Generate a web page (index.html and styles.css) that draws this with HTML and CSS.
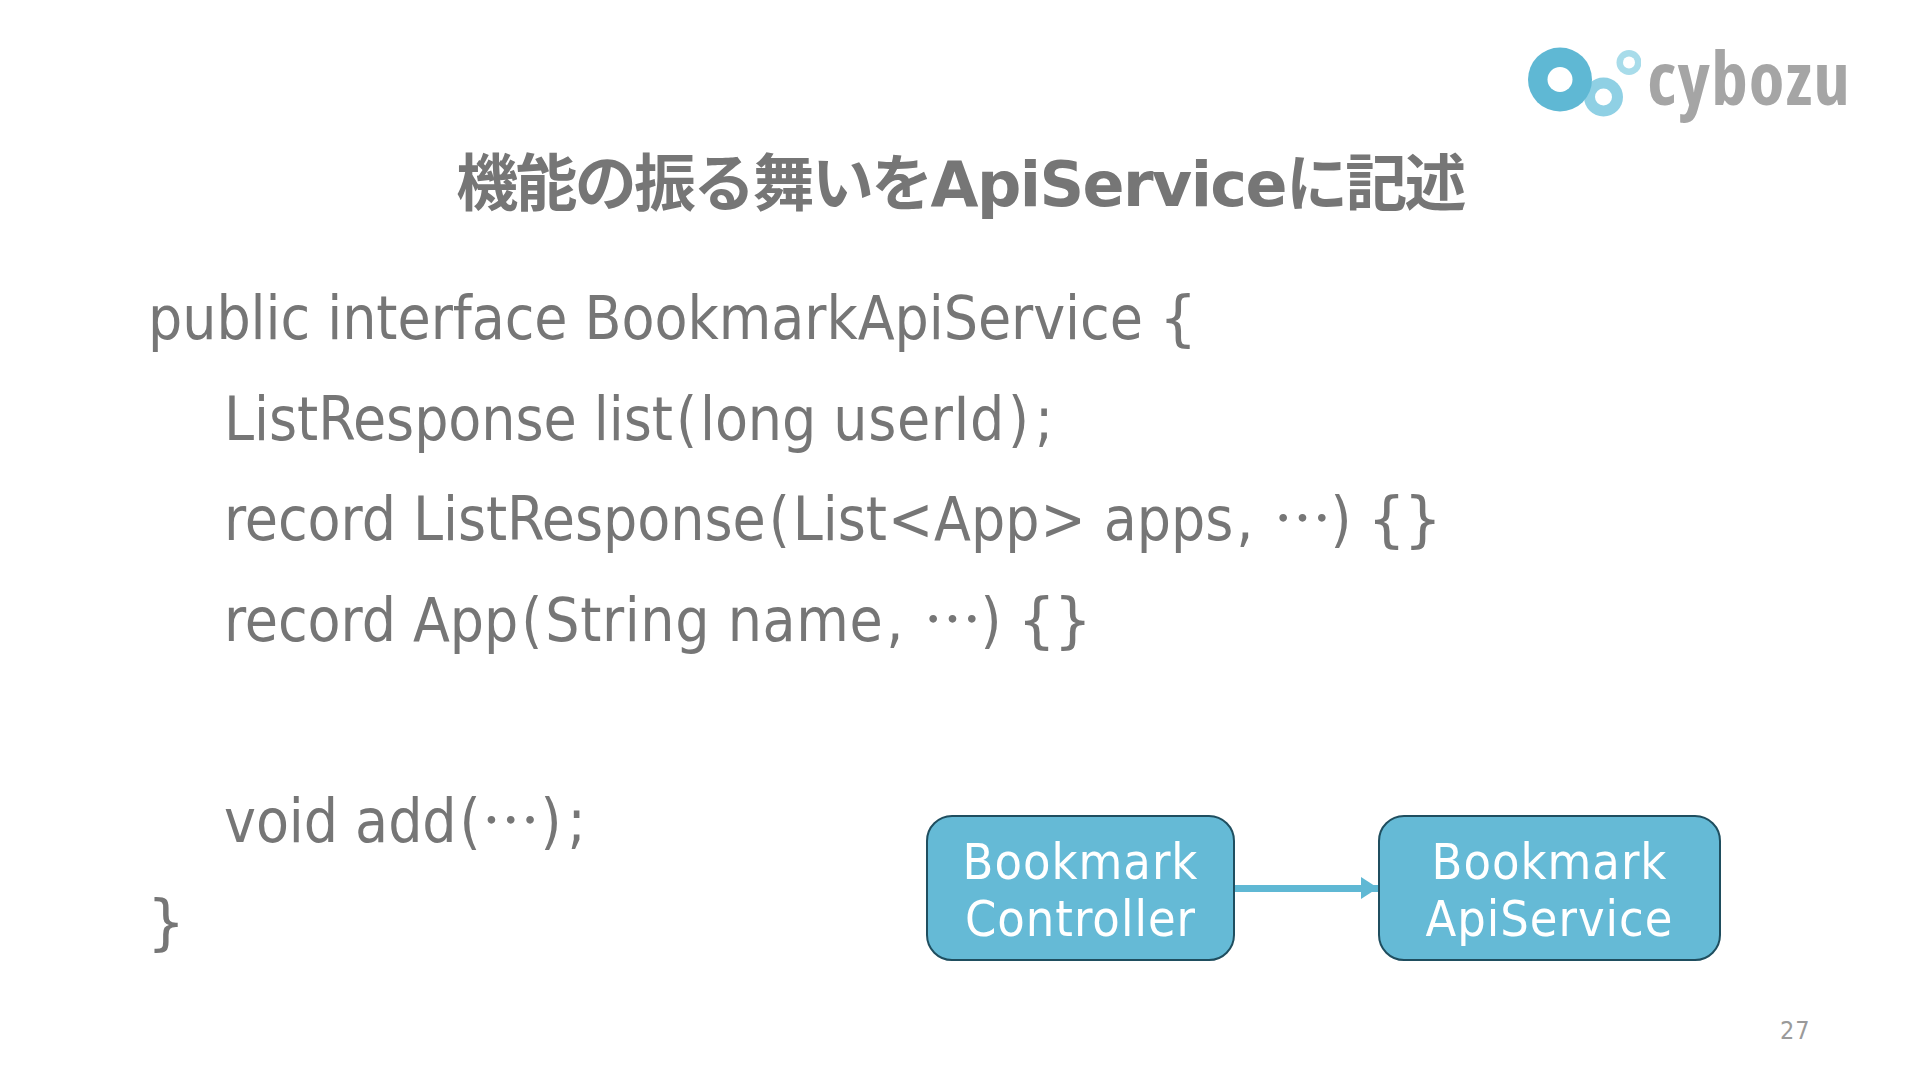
FILE: index.html
```html
<!DOCTYPE html>
<html lang="ja">
<head>
<meta charset="utf-8">
<title>機能の振る舞いをApiServiceに記述</title>
<link rel="stylesheet" href="styles.css">
</head>
<body>
<main class="slide">
  <header class="top">
    <div class="logo">
      <svg class="logo-mark" width="113" height="71" viewBox="0 0 113 71" aria-hidden="true">
        <circle cx="75.5" cy="50" r="19.5" fill="#8fd0e4"/>
        <circle cx="75.5" cy="50" r="8.5" fill="#fff"/>
        <circle cx="32" cy="32.5" r="32" fill="#5fb8d4"/>
        <circle cx="32" cy="32.5" r="12.5" fill="#fff"/>
        <circle cx="101" cy="15.5" r="12.5" fill="#a8dcea"/>
        <circle cx="101" cy="15.5" r="6" fill="#fff"/>
      </svg>
      <span class="logo-word">cybozu</span>
    </div>
  </header>
  <h1 class="title">機能の振る舞いを<span class="lat">ApiService</span>に記述</h1>
  <section class="code">
    <p class="line">public interface BookmarkApiService <span class="br">{</span></p>
    <p class="line in">ListResponse list<span class="pn">(</span>long <span class="tr">userId</span><span class="pn">)</span><span class="pn">;</span></p>
    <p class="line in">record ListResponse<span class="pn">(</span>List<span class="op">&lt;</span>App<span class="op">&gt;</span> apps<span class="pn">,</span> <span class="dots dots-end">⋯</span><span class="pn">)</span> <span class="br br-pair">{}</span></p>
    <p class="line in">record App<span class="pn">(</span><span class="tr">String name</span><span class="pn">,</span> <span class="dots dots-end">⋯</span><span class="pn">)</span> <span class="br br-pair">{}</span></p>
    <p class="line in">&nbsp;</p>
    <p class="line in">void add<span class="pn">(</span><span class="dots dots-tight">⋯</span><span class="pn">)</span><span class="pn">;</span></p>
    <p class="line"><span class="br">}</span></p>
  </section>
  <div class="diagram">
    <div class="box box-a">Bookmark<br>Controller</div>
    <div class="arrow"></div>
    <div class="box box-b">Bookmark<br>ApiService</div>
  </div>
  <footer class="page">27</footer>
</main>
</body>
</html>
```
FILE: styles.css
```css
* { box-sizing: border-box; }
html, body { margin: 0; padding: 0; background: #fff; }
.slide {
  position: relative;
  width: 1920px;
  height: 1080px;
  overflow: hidden;
  font-family: "DejaVu Sans", "Noto Sans CJK JP", sans-serif;
  font-stretch: condensed;
  color: #767676;
  padding-top: 47px;
}
.top { display: flex; justify-content: flex-end; padding-right: 69px; height: 78px; }
.logo { display: flex; align-items: flex-start; gap: 6px; }
.logo-mark { flex: none; }
.logo-word {
  font-family: "Open Sans", sans-serif;
  font-stretch: 75%;
  font-weight: 700;
  font-size: 73px;
  line-height: 60px;
  letter-spacing: 1.2px;
  color: #a5a5a5;
}
.title {
  margin: 20px 0 0;
  text-align: center;
  font-size: 62px;
  line-height: 80px;
  font-weight: 700;
  font-stretch: normal;
  letter-spacing: -2.7px;
}
.lat { letter-spacing: -1.6px; }
.code { position: absolute; top: 268px; left: 148px; }
.line { margin: 0; font-size: 60px; line-height: 100.6px; white-space: pre; letter-spacing: -0.05px; }
.in { padding-left: 76px; }
.pn { margin: 0 3px; }
.op { margin: 0 1px; }
.tr { letter-spacing: 0.6px; }
.br { font-stretch: normal; letter-spacing: -1px; margin-left: -1px; }
.br-pair { letter-spacing: -2px; margin-left: -4px; }
.dots { font-family: "Noto Sans CJK JP", sans-serif; font-stretch: normal; font-size: 58px; line-height: 0; }
.dots-end { margin-right: -4px; }
.dots-tight { margin: 0 -2px; }
.diagram {
  position: absolute;
  left: 926px;
  top: 815px;
  display: flex;
  align-items: center;
}
.box {
  height: 146px;
  padding-top: 5px;
  background: #65bad6;
  border: 2px solid #1f4e5f;
  border-radius: 26px;
  color: #fff;
  font-size: 50px;
  line-height: 57px;
  letter-spacing: 1px;
  text-align: center;
  display: flex;
  align-items: center;
  justify-content: center;
}
.box-a { width: 309px; }
.box-b { width: 343px; }
.arrow {
  position: relative;
  width: 143px;
  height: 7px;
  background: #5fb8d4;
}
.arrow::after {
  content: "";
  position: absolute;
  right: 0;
  top: -8px;
  border-left: 17px solid #5fb8d4;
  border-top: 11.5px solid transparent;
  border-bottom: 11.5px solid transparent;
}
.page {
  position: absolute;
  left: 1780px;
  top: 1016px;
  font-size: 25px;
  line-height: 30px;
  letter-spacing: 1px;
  color: #9a9a9a;
}
```
